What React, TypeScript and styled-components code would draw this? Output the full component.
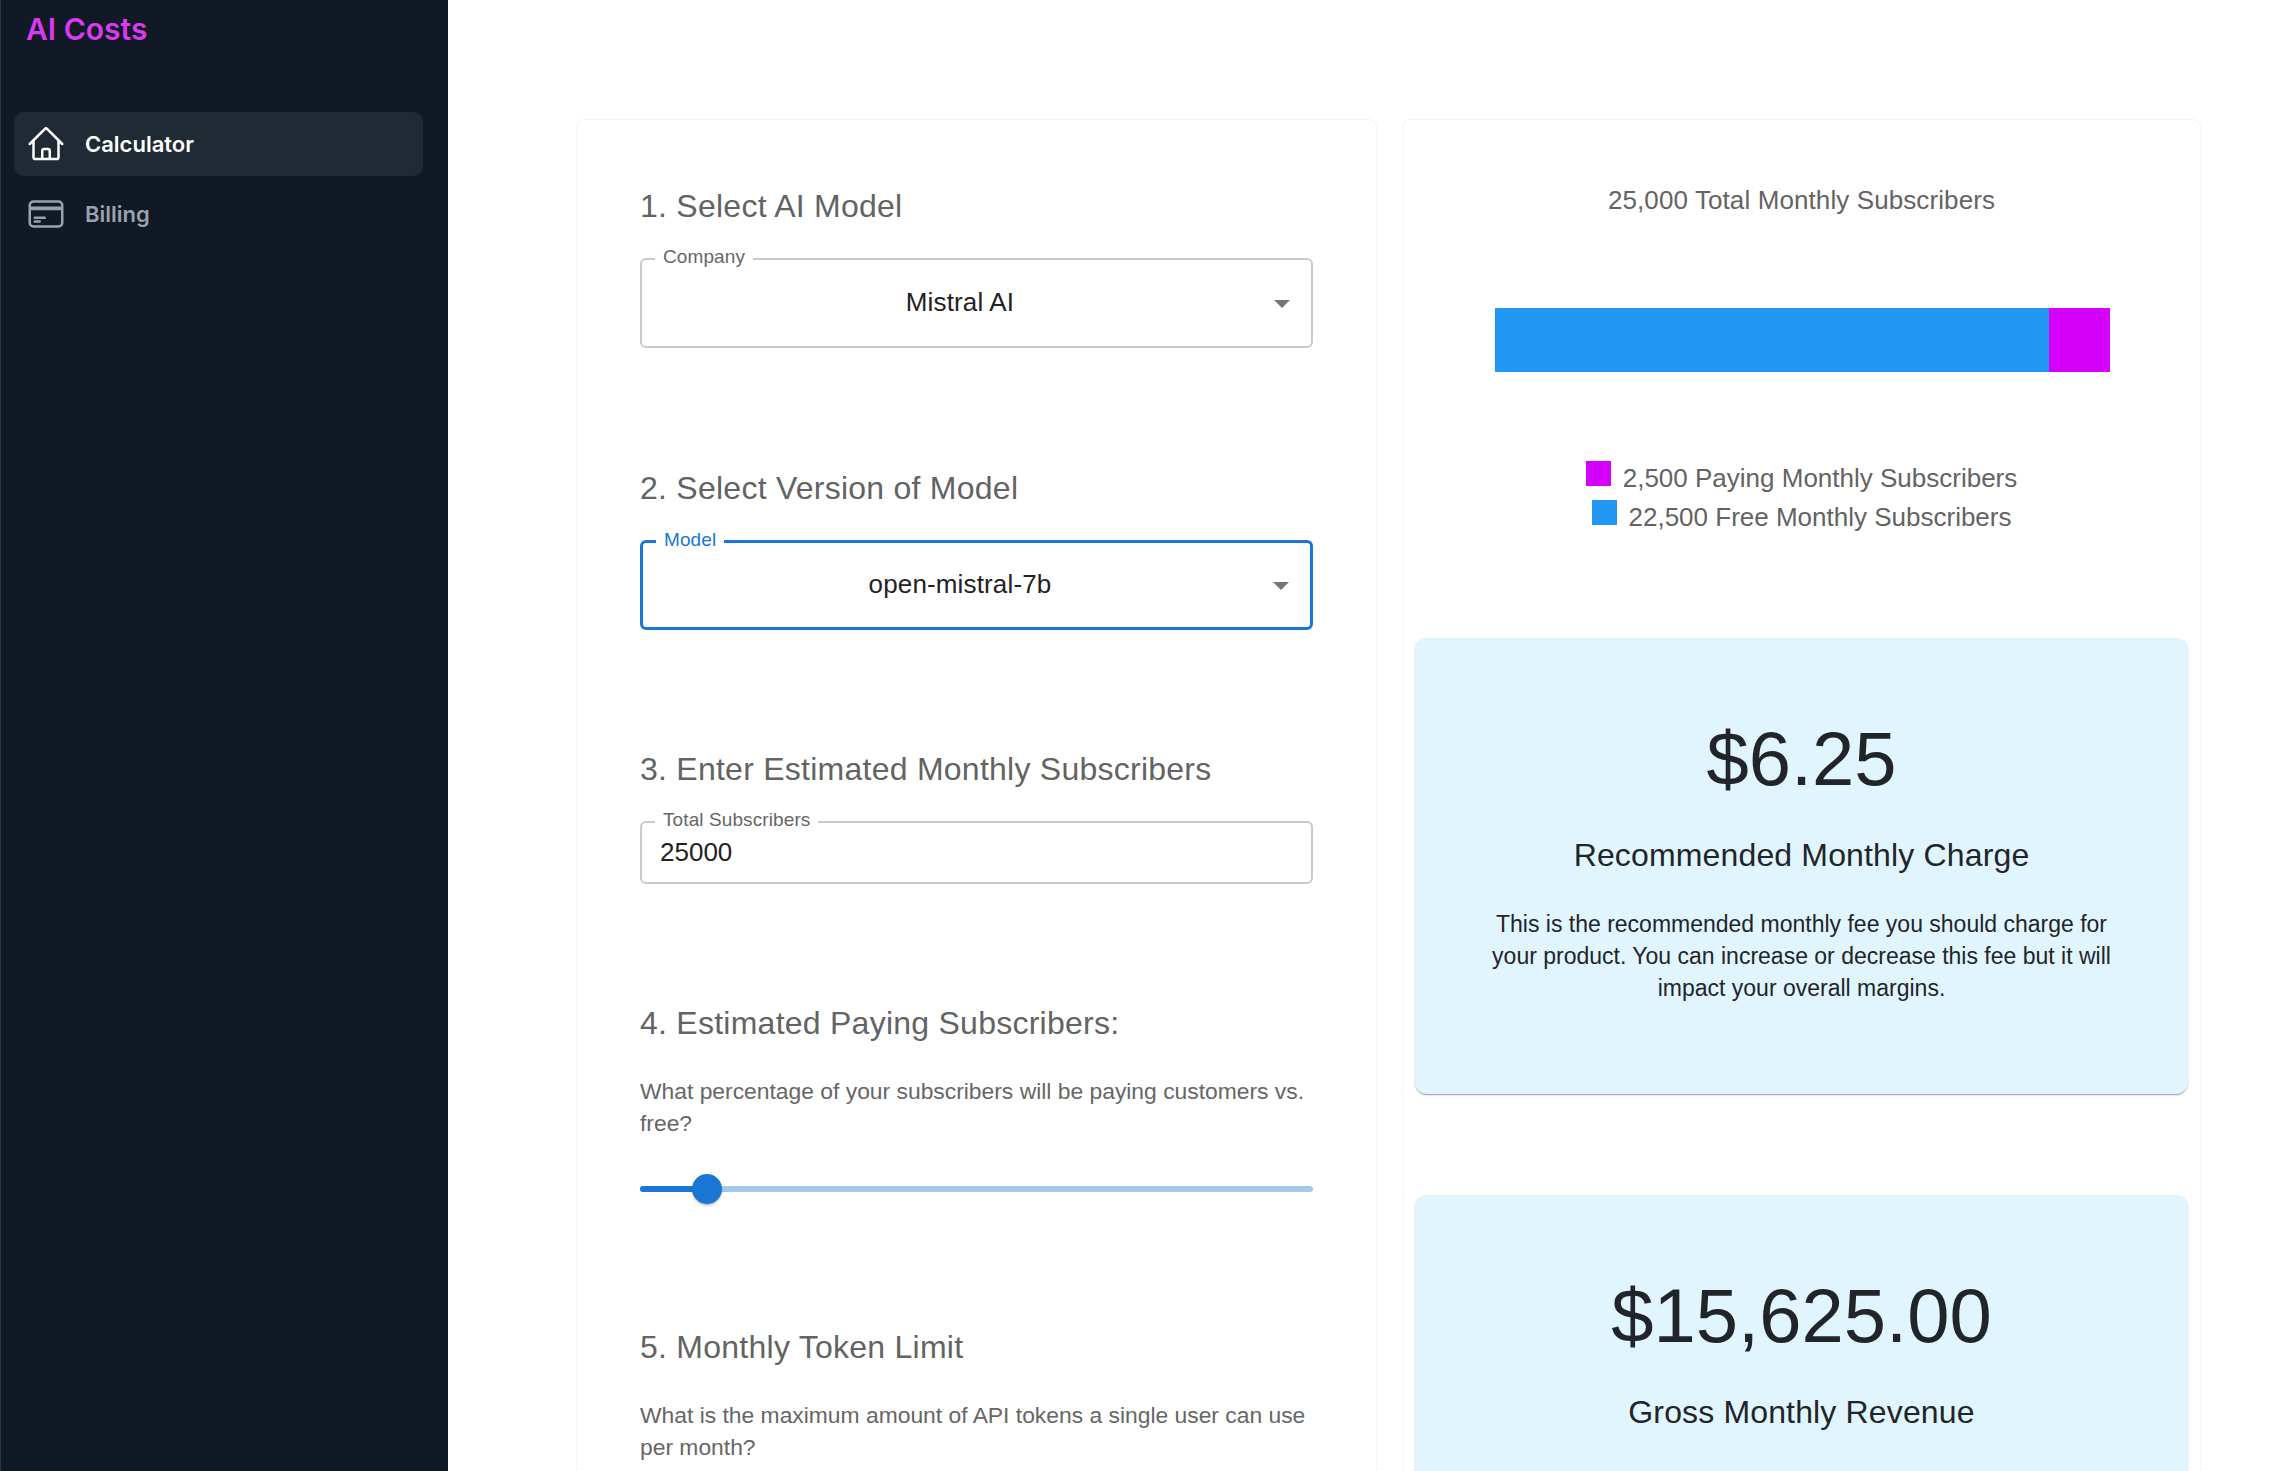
import React from "react";
import styled, { createGlobalStyle } from "styled-components";
import { HiOutlineHome, HiOutlineCreditCard } from "react-icons/hi2";

const GlobalStyle = createGlobalStyle`
  html, body {
    margin: 0;
    padding: 0;
    height: 100%;
    overflow: hidden;
    background: #fff;
  }
  #root {
    height: 100%;
  }
  * {
    box-sizing: border-box;
  }
`;

const Shell = styled.div`
  display: flex;
  height: 1471px;
  overflow: hidden;
  font-family: "Liberation Sans", Arial, sans-serif;
`;

const Sidebar = styled.aside`
  width: 448px;
  flex: none;
  background: #111927;
  border-left: 1px solid #2b3340;
  padding: 0 25px 0 13px;
  font-family: Inter, "Liberation Sans", sans-serif;
`;

const Logo = styled.div`
  font-size: 30px;
  font-weight: 600;
  line-height: 36px;
  color: #d83bed;
  padding: 11px 0 0 12px;
  height: 112px;
`;

const NavItem = styled.div<{ $active?: boolean }>`
  display: flex;
  align-items: center;
  gap: 20px;
  height: 64px;
  padding-left: 15px;
  margin-bottom: 6px;
  border-radius: 10px;
  background: ${(p) => (p.$active ? "#1f2a35" : "transparent")};
  color: ${(p) => (p.$active ? "#ffffff" : "#9aa1ad")};
  font-size: 22px;
  font-weight: 600;
  svg {
    width: 40px;
    height: 40px;
    stroke-width: 1.5;
    margin-left: -3px;
    margin-right: -1px;
  }
`;

const Main = styled.main`
  flex: 1;
  display: grid;
  grid-template-columns: 801px 799px;
  gap: 25px;
  align-items: start;
  padding: 119px 74px 0 128px;
`;

const Card = styled.section<{ $pad: string }>`
  min-width: 0;
  min-height: 1400px;
  border: 1px solid #f5f5f5;
  border-radius: 8px;
  padding: ${(p) => p.$pad};
`;

const Step = styled.div<{ $gap?: number }>`
  margin-bottom: ${(p) => p.$gap ?? 119}px;
`;

const Heading = styled.h2`
  margin: 0 0 32px;
  font-size: 32px;
  font-weight: 400;
  line-height: 40px;
  letter-spacing: 0.25px;
  color: #636363;
`;

const Field = styled.div<{ $focused?: boolean; $tall?: boolean }>`
  position: relative;
  display: flex;
  align-items: center;
  height: ${(p) => (p.$tall ? "90px" : "63px")};
  border: ${(p) => (p.$focused ? "3px solid #1976d2" : "2px solid #c9c9c9")};
  border-radius: 6px;
`;

const FieldLabel = styled.label<{ $focused?: boolean }>`
  position: absolute;
  top: -14px;
  left: 13px;
  padding: 0 8px;
  background: #fff;
  font-size: 19px;
  line-height: 22px;
  letter-spacing: 0.1px;
  color: ${(p) => (p.$focused ? "#1976d2" : "#666666")};
`;

const SelectValue = styled.div`
  flex: 1;
  padding: 0 33px 2px 0;
  text-align: center;
  font-size: 26px;
  letter-spacing: 0.15px;
  color: #222222;
`;

const Caret = styled.span`
  position: absolute;
  right: 21px;
  top: 50%;
  margin-top: -3px;
  width: 0;
  height: 0;
  border-left: 8px solid transparent;
  border-right: 8px solid transparent;
  border-top: 8px solid #757575;
`;

const TextInput = styled.input`
  flex: 1;
  width: 100%;
  padding: 0 18px;
  border: 0;
  outline: 0;
  background: transparent;
  font-family: inherit;
  font-size: 26px;
  color: #222222;
`;

const Hint = styled.p`
  margin: 0;
  font-size: 22.85px;
  line-height: 32px;
  color: #666666;
`;

const SliderWrap = styled.div`
  position: relative;
  height: 29px;
  margin-top: 35px;
`;

const Rail = styled.div`
  position: absolute;
  left: 0;
  right: 0;
  top: 12px;
  height: 6px;
  border-radius: 3px;
  background: #a3c8ee;
`;

const RailFill = styled.div`
  position: absolute;
  left: 0;
  top: 12px;
  height: 6px;
  border-radius: 3px;
  background: #1976d2;
`;

const Thumb = styled.div`
  position: absolute;
  top: 0;
  width: 30px;
  height: 30px;
  margin-left: -15px;
  border-radius: 50%;
  background: #1976d2;
  box-shadow: 0 3px 2px -2px rgba(0, 0, 0, 0.2), 0 2px 3px rgba(0, 0, 0, 0.14);
`;

const ChartTitle = styled.div`
  text-align: center;
  font-size: 26px;
  line-height: 36px;
  letter-spacing: 0.1px;
  color: #636363;
`;

const Bar = styled.div`
  display: flex;
  height: 64px;
  margin: 90px 90px 87px 92px;
`;

const BarPart = styled.div<{ $color: string }>`
  background: ${(p) => p.$color};
`;

const Legend = styled.div`
  display: flex;
  flex-direction: column;
  align-items: center;
  margin-bottom: 101px;
`;

const LegendRow = styled.div`
  display: flex;
  align-items: flex-start;
  gap: 12px;
  height: 39px;
  font-size: 26px;
  line-height: 39px;
  color: #636363;
`;

const Swatch = styled.span<{ $color: string }>`
  width: 25px;
  height: 25px;
  margin-top: 2px;
  background: ${(p) => p.$color};
`;

const StatCard = styled.div`
  height: 456px;
  margin: 0 12px 101px;
  padding: 76px 70px 0;
  border-radius: 12px;
  background: #e1f5fe;
  box-shadow: 0 2px 1px -1px rgba(0, 0, 0, 0.2), 0 1px 1px rgba(0, 0, 0, 0.14), 0 1px 3px rgba(0, 0, 0, 0.12);
  text-align: center;
  color: #212529;
`;

const StatValue = styled.div`
  font-size: 76px;
  line-height: 90px;
`;

const StatTitle = styled.div`
  margin-top: 31px;
  font-size: 32px;
  line-height: 40px;
  letter-spacing: 0.15px;
`;

const StatText = styled.p`
  margin: 33px 0 0;
  font-size: 23px;
  line-height: 32px;
`;

export default function App() {
  return (
    <>
      <GlobalStyle />
      <Shell>
        <Sidebar>
          <Logo>AI Costs</Logo>
          <NavItem $active>
            <HiOutlineHome />
            Calculator
          </NavItem>
          <NavItem>
            <HiOutlineCreditCard />
            Billing
          </NavItem>
        </Sidebar>
        <Main>
          <Card $pad="66px 63px 0">
            <Step $gap={120}>
              <Heading>1. Select AI Model</Heading>
              <Field $tall>
                <FieldLabel>Company</FieldLabel>
                <SelectValue>Mistral AI</SelectValue>
                <Caret />
              </Field>
            </Step>
            <Step>
              <Heading>2. Select Version of Model</Heading>
              <Field $tall $focused>
                <FieldLabel $focused>Model</FieldLabel>
                <SelectValue>open-mistral-7b</SelectValue>
                <Caret />
              </Field>
            </Step>
            <Step>
              <Heading>3. Enter Estimated Monthly Subscribers</Heading>
              <Field>
                <FieldLabel>Total Subscribers</FieldLabel>
                <TextInput defaultValue="25000" />
              </Field>
            </Step>
            <Step $gap={124}>
              <Heading>4. Estimated Paying Subscribers:</Heading>
              <Hint>What percentage of your subscribers will be paying customers vs. free?</Hint>
              <SliderWrap>
                <Rail />
                <RailFill style={{ width: "10%" }} />
                <Thumb style={{ left: "10%" }} />
              </SliderWrap>
            </Step>
            <Heading>5. Monthly Token Limit</Heading>
            <Hint>What is the maximum amount of API tokens a single user can use per month?</Hint>
          </Card>
          <Card $pad="62px 0 0">
            <ChartTitle>25,000 Total Monthly Subscribers</ChartTitle>
            <Bar>
              <BarPart $color="#2196f3" style={{ width: "90%" }} />
              <BarPart $color="#d500f9" style={{ width: "10%" }} />
            </Bar>
            <Legend>
              <LegendRow>
                <Swatch $color="#d500f9" />
                2,500 Paying Monthly Subscribers
              </LegendRow>
              <LegendRow>
                <Swatch $color="#2196f3" />
                22,500 Free Monthly Subscribers
              </LegendRow>
            </Legend>
            <StatCard>
              <StatValue>$6.25</StatValue>
              <StatTitle>Recommended Monthly Charge</StatTitle>
              <StatText>
                This is the recommended monthly fee you should charge for your product. You can increase or
                decrease this fee but it will impact your overall margins.
              </StatText>
            </StatCard>
            <StatCard>
              <StatValue>$15,625.00</StatValue>
              <StatTitle>Gross Monthly Revenue</StatTitle>
            </StatCard>
          </Card>
        </Main>
      </Shell>
    </>
  );
}
